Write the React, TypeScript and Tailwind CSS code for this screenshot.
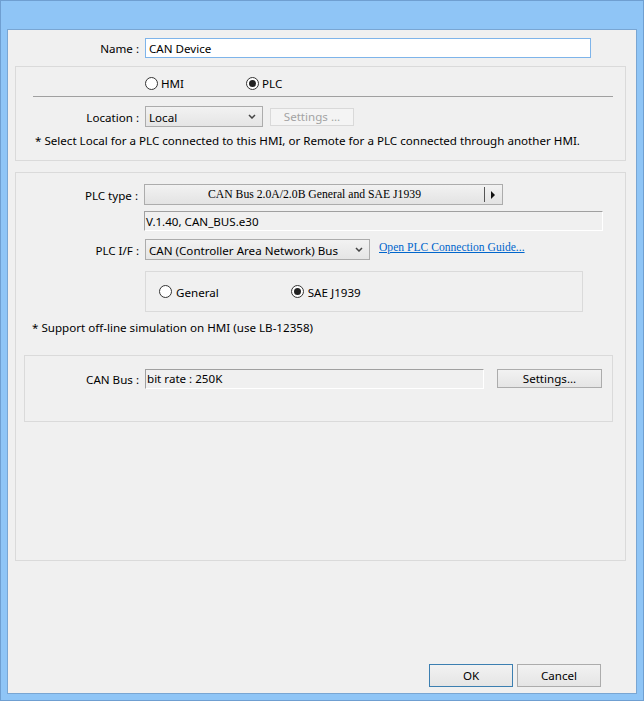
import React from "react";

const ui = { fontFamily: '"Noto Sans", "Open Sans", "DejaVu Sans", sans-serif' };
const serif = { fontFamily: '"Liberation Serif", "DejaVu Serif", serif' };

function Radio({ checked }: { checked?: boolean }) {
  return (
    <span className="flex h-[13px] w-[13px] shrink-0 items-center justify-center rounded-full border border-[#333] bg-white">
      {checked && <span className="h-[7px] w-[7px] rounded-full bg-[#222]" />}
    </span>
  );
}

function Chevron() {
  return (
    <svg width="8" height="5" viewBox="0 0 8 5" className="shrink-0">
      <path d="M1 1 L4 4 L7 1" fill="none" stroke="#444" strokeWidth="1.5" />
    </svg>
  );
}

function Label({ w, children }: { w: string; children: React.ReactNode }) {
  return <div className={`${w} shrink-0 pr-[6px] pt-[2px] text-right`}>{children}</div>;
}

export default function App() {
  return (
    <div
      className="h-[701px] w-[644px] border border-[#6f9fd1] bg-[#8fc5f6] pl-[6px] pr-[6px] pt-[28px] pb-[6px] text-[11.6px] leading-none text-black"
      style={ui}
    >
      <div className="flex h-[665px] w-[630px] flex-col border border-[#79a6d3] bg-[#f0f0f0]">
        {/* Name */}
        <div className="mt-[8px] flex items-center">
          <Label w="w-[137px]">Name :</Label>
          <div className="flex h-[20px] w-[446px] items-center border border-[#7eb4ea] bg-white pl-[3px] pt-[2px]">
            CAN Device
          </div>
        </div>

        {/* HMI / PLC location group */}
        <div className="ml-[7px] mt-[8px] flex h-[95px] w-[611px] flex-col border border-[#dadada]">
          <div className="mt-[9px] flex h-[14px] items-center">
            <div className="ml-[129px] flex items-center gap-[3px]">
              <Radio />
              <span className="pt-[2px]">HMI</span>
            </div>
            <div className="ml-[62px] flex items-center gap-[3px]">
              <Radio checked />
              <span className="pt-[2px]">PLC</span>
            </div>
          </div>
          <div className="ml-[17px] mt-[6px] h-[1px] w-[580px] bg-[#a0a0a0]" />
          <div className="mt-[9px] flex items-center">
            <Label w="w-[129px]">Location :</Label>
            <div className="flex h-[21px] w-[118px] items-center justify-between border border-[#acacac] bg-gradient-to-b from-[#f2f2f2] to-[#e5e5e5] pl-[3px] pr-[6px]">
              <span className="pt-[2px]">Local</span>
              <Chevron />
            </div>
            <div className="ml-[7px] flex h-[18px] w-[84px] items-center justify-center border border-[#d9d9d9] bg-[#f4f4f4] pt-[1px] text-[#a3a3a3]">
              Settings ...
            </div>
          </div>
          <div className="ml-[19px] mt-[8px]">
            * Select Local for a PLC connected to this HMI, or Remote for a PLC connected through another HMI.
          </div>
        </div>

        {/* PLC group */}
        <div className="ml-[7px] mt-[11px] flex h-[389px] w-[611px] flex-col border border-[#dadada]">
          <div className="mt-[11px] flex items-center">
            <Label w="w-[128px]">PLC type :</Label>
            <div className="flex h-[21px] w-[359px] items-center border border-[#acacac] bg-gradient-to-b from-[#f2f2f2] to-[#e3e3e3]">
              <span className="flex-1 pt-[1px] text-center text-[11.7px]" style={serif}>
                CAN Bus 2.0A/2.0B General and SAE J1939
              </span>
              <span className="h-[15px] w-[1px] bg-[#555]" />
              <svg width="17" height="8" viewBox="0 0 17 8" className="shrink-0">
                <path d="M6 0 L10 4 L6 8 Z" fill="#111" />
              </svg>
            </div>
          </div>
          <div className="ml-[128px] mt-[6px] flex h-[20px] w-[459px] items-center border-b border-l border-r border-t border-b-white border-l-[#a0a0a0] border-r-white border-t-[#a0a0a0] pl-[1px] pt-[1px]">
            V.1.40, CAN_BUS.e30
          </div>
          <div className="mt-[8px] flex items-center">
            <Label w="w-[129px]">PLC I/F :</Label>
            <div className="flex h-[21px] w-[225px] items-center justify-between border border-[#acacac] bg-gradient-to-b from-[#f2f2f2] to-[#e5e5e5] pl-[3px] pr-[6px]">
              <span className="pt-[2px]">CAN (Controller Area Network) Bus</span>
              <Chevron />
            </div>
            <a className="ml-[9px] pb-[3px] text-[11.6px] text-[#0066cc] underline" style={serif}>
              Open PLC Connection Guide...
            </a>
          </div>
          <div className="ml-[129px] mt-[11px] flex h-[41px] w-[438px] items-center border border-[#dadada]">
            <div className="ml-[13px] flex items-center gap-[4px]">
              <Radio />
              <span className="pt-[2px]">General</span>
            </div>
            <div className="ml-[72px] flex items-center gap-[4px]">
              <Radio checked />
              <span className="pt-[2px]">SAE J1939</span>
            </div>
          </div>
          <div className="ml-[16px] mt-[10px]">* Support off-line simulation on HMI (use LB-12358)</div>

          <div className="ml-[8px] mt-[21px] flex h-[67px] w-[589px] flex-col border border-[#dadada]">
            <div className="mt-[13px] flex items-center">
              <Label w="w-[120px]">CAN Bus :</Label>
              <div className="flex h-[20px] w-[339px] items-center border-b border-l border-r border-t border-b-white border-l-[#a0a0a0] border-r-white border-t-[#a0a0a0] pl-[1px] pt-[1px]">
                bit rate : 250K
              </div>
              <div className="ml-[13px] flex h-[19px] w-[105px] items-center justify-center border border-[#acacac] bg-gradient-to-b from-[#f2f2f2] to-[#e5e5e5] pt-[1px]">
                Settings...
              </div>
            </div>
          </div>
        </div>

        {/* Dialog buttons */}
        <div className="mt-auto mb-[6px] flex justify-end gap-[4px] pr-[35px]">
          <div className="flex h-[23px] w-[84px] items-center justify-center border border-[#3c7fb1] bg-gradient-to-b from-[#f2f2f2] to-[#e5e5e5] pt-[1px]">
            OK
          </div>
          <div className="flex h-[23px] w-[84px] items-center justify-center border border-[#acacac] bg-gradient-to-b from-[#f2f2f2] to-[#e5e5e5] pt-[1px]">
            Cancel
          </div>
        </div>
      </div>
    </div>
  );
}
